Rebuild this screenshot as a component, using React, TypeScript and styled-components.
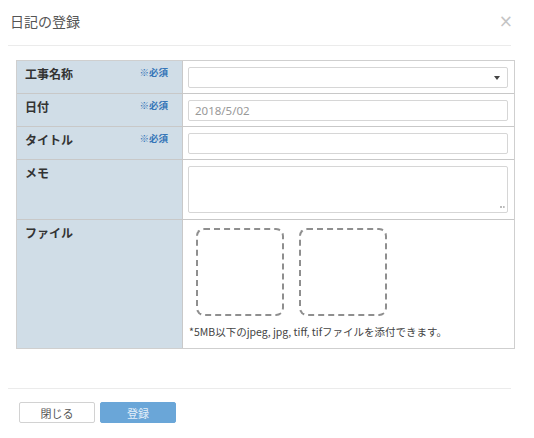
import styled, { createGlobalStyle } from "styled-components"

const GlobalStyle = createGlobalStyle`
  html, body {
    margin: 0;
    padding: 0;
    background: #fff;
    font-family: "Noto Sans CJK JP", "Noto Sans", sans-serif;
  }
  * { box-sizing: border-box; }
`

const rows = [
    { label: '工事名称', required: true, kind: 'select' },
    { label: '日付', required: true, kind: 'date' },
    { label: 'タイトル', required: true, kind: 'text' },
    { label: 'メモ', required: false, kind: 'memo' },
]

export default function App() {
    return (
        <>
            <GlobalStyle />
            <Modal>
                <Header>
                    <Title>日記の登録</Title>
                    <Close>×</Close>
                </Header>
                <Body>
                    <FormTable>
                        {rows.map((r) => (
                            <Row key={r.label}>
                                <LabelCell>
                                    <LabelText>{r.label}</LabelText>
                                    {r.required && <Required>※必須</Required>}
                                </LabelCell>
                                <FieldCell>
                                    {r.kind === 'select' && (
                                        <SelectBox>
                                            <Caret />
                                        </SelectBox>
                                    )}
                                    {r.kind === 'date' && <Input defaultValue="2018/5/02" />}
                                    {r.kind === 'text' && <Input />}
                                    {r.kind === 'memo' && <Memo />}
                                </FieldCell>
                            </Row>
                        ))}
                        <Row $last>
                            <LabelCell>
                                <LabelText>ファイル</LabelText>
                            </LabelCell>
                            <FieldCell>
                                <DropList>
                                    <DropBox />
                                    <DropBox />
                                </DropList>
                                <Note>*5MB以下のjpeg, jpg, tiff, tifファイルを添付できます。</Note>
                            </FieldCell>
                        </Row>
                    </FormTable>
                </Body>
                <Footer>
                    <Button>閉じる</Button>
                    <Button $primary>登録</Button>
                </Footer>
            </Modal>
        </>
    )
}

const Modal = styled.div`
width: 534px;
height: 438px;
padding: 0 23px 0 8px;
display: flex;
flex-direction: column;
`
const Header = styled.div`
height: 46px;
display: flex;
align-items: center;
justify-content: space-between;
padding: 0 0 3px 2px;
border-bottom: 1px solid #ebebeb;
`
const Title = styled.h2`
margin: 0;
font-size: 14px;
font-weight: 400;
color: #555;
`
const Close = styled.span`
font-family: "DejaVu Sans", sans-serif;
font-size: 17px;
color: #c4c4c4;
margin-right: -2px;
`
const Body = styled.div`
padding: 14px 0 0 8px;
height: 342px;
`
const FormTable = styled.div`
width: 499px;
border: 1px solid #cfcfcf;
display: flex;
flex-direction: column;
`
const Row = styled.div<{ $last?: boolean }>`
display: grid;
grid-template-columns: 166px 1fr;
border-bottom: ${(p) => (p.$last ? 'none' : '1px solid #c8c8c8')};
`
const LabelCell = styled.div`
background: #d0dde7;
border-right: 1px solid #c9c9c9;
padding: 5px 14px 0 8px;
display: flex;
justify-content: space-between;
align-items: flex-start;
`
const LabelText = styled.span`
font-size: 12px;
font-weight: 700;
color: #333;
line-height: 16px;
`
const Required = styled.span`
font-size: 9.5px;
font-weight: 700;
color: #3676b8;
line-height: 12px;
`
const FieldCell = styled.div`
padding: 6px 5px 5px 5px;
display: flex;
flex-direction: column;
`
const fieldBase = `
width: 320px;
border: 1px solid #d6d6d6;
border-radius: 2px;
background: #fff;
`
const SelectBox = styled.div`
${fieldBase}
height: 21px;
display: flex;
align-items: center;
justify-content: flex-end;
padding-right: 7px;
`
const Caret = styled.span`
width: 0;
height: 0;
border-left: 3px solid transparent;
border-right: 3px solid transparent;
border-top: 4px solid #444;
`
const Input = styled.input`
${fieldBase}
height: 21px;
padding: 0 6px;
font-family: "Noto Sans", sans-serif;
font-size: 11.5px;
color: #999;
outline: none;
`
const Memo = styled.div`
${fieldBase}
height: 47px;
margin-bottom: 1px;
position: relative;
&::after {
  content: '';
  position: absolute;
  right: 2px;
  bottom: 2px;
  width: 5px;
  height: 2px;
  border-top: 2px dotted #bbb;
}
`
const DropList = styled.div`
display: flex;
gap: 15px;
padding: 2px 0 0 8px;
`
const DropBox = styled.div`
width: 88px;
height: 88px;
border: 2px dashed #8f8f8f;
border-radius: 8px;
`
const Note = styled.p`
margin: 8px 0 3px 1px;
font-size: 10.5px;
color: #444;
line-height: 16px;
`
const Footer = styled.div`
border-top: 1px solid #ebebeb;
padding: 13px 0 0 11px;
display: flex;
gap: 5px;
`
const Button = styled.button<{ $primary?: boolean }>`
width: 76px;
height: 21px;
font-family: "Noto Sans CJK JP", sans-serif;
font-size: 11px;
border-radius: 2px;
border: 1px solid ${(p) => (p.$primary ? '#6aa6d8' : '#d2d2d2')};
background: ${(p) => (p.$primary ? '#6aa6d8' : '#fff')};
color: ${(p) => (p.$primary ? '#e4effa' : '#555')};
padding: 0;
`
